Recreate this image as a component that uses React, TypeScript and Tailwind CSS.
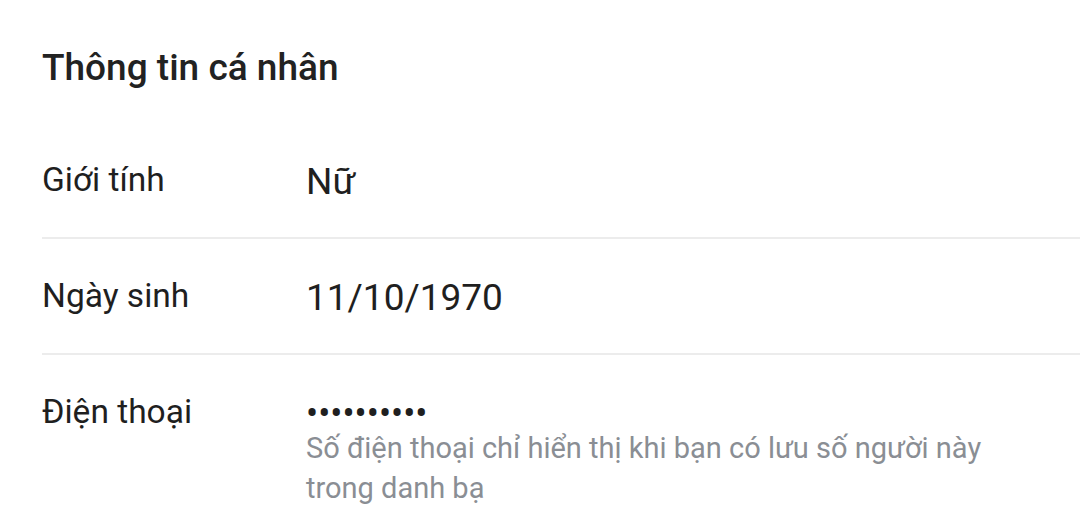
export default function App() {
  const rows = [
    { label: "Giới tính", value: "Nữ" },
    { label: "Ngày sinh", value: "11/10/1970" },
  ];

  return (
    <div
      className="w-[1080px] h-[521px] overflow-hidden bg-white pl-[42px]"
      style={{ fontFamily: "Roboto, 'Noto Sans', sans-serif" }}
    >
      <h2 className="pt-[46px] h-[123px] text-[37px] leading-[44px] font-medium text-[#222222]">
        Thông tin cá nhân
      </h2>

      {rows.map((row) => (
        <div key={row.label} className="flex h-[116px] border-b-2 border-[#ececec]">
          <div className="w-[264px] pt-[37px] text-[33.5px] leading-[40px] text-[#1f1f1f]">
            {row.label}
          </div>
          <div className="pt-[37px] text-[37px] leading-[44px] text-[#1f1f1f]">
            {row.value}
          </div>
        </div>
      ))}

      <div className="flex">
        <div className="w-[264px] pt-[37px] text-[33.5px] leading-[40px] text-[#1f1f1f]">
          Điện thoại
        </div>
        <div className="flex-1 pt-[44px]">
          <div className="h-[29px] text-[36px] leading-[30px] text-[#1f1f1f]">
            ••••••••••
          </div>
          <p className="w-[700px] text-[29px] leading-[40px] text-[#8a8e94]">
            Số điện thoại chỉ hiển thị khi bạn có lưu số người này trong danh bạ
          </p>
        </div>
      </div>
    </div>
  );
}
